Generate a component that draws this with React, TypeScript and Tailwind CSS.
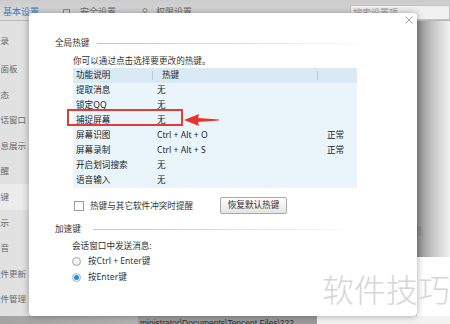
const sideItems = ['登录', '主面板', '状态', '会话窗口', '信息展示', '提醒', '热键', '显示', '声音', '软件更新', '文件管理'];

const hotkeys = [
  { name: '提取消息', key: '无', state: '' },
  { name: '锁定QQ', key: '无', state: '' },
  { name: '捕捉屏幕', key: '无', state: '' },
  { name: '屏幕识图', key: 'Ctrl + Alt + O', state: '正常' },
  { name: '屏幕录制', key: 'Ctrl + Alt + S', state: '正常' },
  { name: '开启划词搜索', key: '无', state: '' },
  { name: '语音输入', key: '无', state: '' },
];

function SectionTitle({ label, gap, width }: { label: string; gap: string; width: string }) {
  return (
    <div className="flex items-center h-[12px]">
      <span className="leading-[12px] text-[#333]">{label}</span>
      <span className={`${gap} ${width} h-px bg-gradient-to-r from-[#b4c7d5] via-[#d5e1ea] to-transparent`} />
    </div>
  );
}

function Radio({ checked }: { checked?: boolean }) {
  if (checked) {
    return (
      <span className="w-[9px] h-[9px] rounded-full border border-[#8db6d6] bg-white flex items-center justify-center">
        <span className="w-[5px] h-[5px] rounded-full bg-[#1c8de0]" />
      </span>
    );
  }
  return <span className="w-[9px] h-[9px] rounded-full border border-[#a3a3a3] bg-gradient-to-b from-white to-[#ececec]" />;
}

export default function App() {
  return (
    <div className="relative w-[450px] h-[324px] overflow-hidden bg-white font-['Noto_Sans','Noto_Sans_CJK_SC',sans-serif] text-[#333]">
      {/* settings window behind the dialog */}
      <div className="flex flex-col h-full">
        <div className="h-[21px] shrink-0 flex items-start bg-gradient-to-b from-[#cbcbcb] to-[#e2e2e2] border-b border-[#b7b7b7] text-[9px]">
          <span className="ml-[3px] mt-[6px] leading-[12px] text-[#3a7fc2]">基本设置</span>
          <span className="ml-[24px] mt-[9px] w-[7px] h-[7px] border border-[#8a8a8a]" />
          <span className="ml-[10px] mt-[6px] leading-[12px] text-[#6a6a6a]">安全设置</span>
          <svg className="ml-[25px] mt-[8px]" width="8" height="8" viewBox="0 0 8 8">
            <circle cx="4" cy="2.5" r="2" fill="none" stroke="#8a8a8a" strokeWidth="1" />
            <path d="M0.5 8 C1 5.5 7 5.5 7.5 8" fill="none" stroke="#8a8a8a" strokeWidth="1" />
          </svg>
          <span className="ml-[7px] mt-[6px] leading-[12px] text-[#6a6a6a]">权限设置</span>
          <div className="ml-auto mt-[5px] w-[100px] h-[15px] border border-[#c2c2c2] bg-[#f1f1f1] pl-[2px] leading-[13px] text-[#9a9a9a]">
            搜索设置项
          </div>
        </div>

        <div className="flex flex-1 min-h-0">
          <div className="w-[29px] shrink-0 bg-[#e1e1e1] overflow-hidden pt-[7px] text-[8.5px] text-[#6b6b6b]">
            {sideItems.map((item, i) => (
              <div
                key={item}
                className={`h-[25.6px] leading-[25.6px] whitespace-nowrap ml-[-8px] ${i === 0 ? 'mb-[2.4px]' : ''} ${
                  item === '热键' ? 'bg-[#ececec]' : ''
                }`}
              >
                {item}
              </div>
            ))}
          </div>
          <div className="flex-1 bg-[#d6d6d6]" />
          <div className="w-[33px] shrink-0 flex flex-col">
            <div className="h-[236px] bg-gradient-to-r from-[#8a8a8a] via-[#c9c9c9] to-[#f1f1f1] pt-[204px]">
              <span className="block ml-[-3px] text-[8px] leading-[12px] text-[#777]">页</span>
            </div>
            <div className="flex-1 bg-white" />
          </div>
        </div>

        <div className="h-[8px] shrink-0 flex overflow-hidden">
          <div className="w-[138px] bg-gradient-to-r from-[#a3a3a3] to-[#b2b2b2]" />
          <div className="w-[179px] bg-[#9b9b9b] pl-[2px] pt-[1px] font-['Liberation_Sans',sans-serif] text-[8.5px] leading-[12px] text-[#2a2a2a] whitespace-nowrap">
            ministrator\Documents\Tencent Files\222
          </div>
          <div className="flex-1 bg-[#f2f2f2]" />
        </div>
      </div>

      {/* hotkey dialog */}
      <div className="absolute left-[29px] top-[13px] w-[388px] h-[303px] rounded-[4px] bg-white shadow-[0_0_7px_rgba(0,0,0,0.35)] pt-[24px] pl-[26px] text-[8.6px]">
        <svg className="absolute right-[4px] top-[3px]" width="8" height="8" viewBox="0 0 8 8">
          <path d="M0.5 0.5 L7.5 7.5 M7.5 0.5 L0.5 7.5" stroke="#a2a2a2" strokeWidth="1" />
        </svg>

        <SectionTitle label="全局热键" gap="ml-[8px]" width="w-[280px]" />
        <div className="ml-[18px] mt-[6px] leading-[12px] text-[#333]">你可以通过点击选择要更改的热键。</div>

        <div className="ml-[18px] mt-[1px] w-[284px] bg-[#eaf5fb] text-[#222]">
          <div className="grid grid-cols-[79px_165px_1fr] h-[15px] bg-[#d9eaf5]">
            <div className="pl-[3px] leading-[15px]">功能说明</div>
            <div className="flex items-center">
              <span className="w-px h-[9px] bg-[#b8cad8]" />
              <span className="ml-[9px] leading-[15px]">热键</span>
            </div>
            <div className="flex items-center">
              <span className="w-px h-[9px] bg-[#b8cad8]" />
            </div>
          </div>
          {hotkeys.map((row) => (
            <div key={row.name} className="grid grid-cols-[79px_165px_1fr] h-[15px] leading-[15px]">
              <div className="pl-[3px] whitespace-nowrap">{row.name}</div>
              <div className="pl-[5px] whitespace-nowrap">{row.key}</div>
              <div className="pl-[10px]">{row.state}</div>
            </div>
          ))}
        </div>

        <div className="mt-[9px] ml-[19px] flex items-center h-[17px]">
          <span className="w-[10px] h-[10px] border border-[#9c9c9c] bg-white" />
          <span className="ml-[6px] w-[130px] leading-[12px] text-[#333]">热键与其它软件冲突时提醒</span>
          <button
            type="button"
            className="w-[67px] h-[17px] border border-[#a8a8a8] rounded-[2px] bg-gradient-to-b from-[#fdfdfd] to-[#e4e4e4] text-[#333] leading-[15px]"
          >
            恢复默认热键
          </button>
        </div>

        <div className="mt-[9px]">
          <SectionTitle label="加速键" gap="ml-[12px]" width="w-[272px]" />
        </div>
        <div className="ml-[17px] mt-[5px] leading-[12px]">会话窗口中发送消息:</div>
        <div className="ml-[17px] mt-[3px] flex items-center h-[12px]">
          <Radio />
          <span className="ml-[7px] leading-[12px]">按Ctrl + Enter键</span>
        </div>
        <div className="ml-[17px] mt-[4px] flex items-center h-[12px]">
          <Radio checked />
          <span className="ml-[7px] leading-[12px]">按Enter键</span>
        </div>
      </div>

      {/* red annotation over the table */}
      <div className="absolute left-[67px] top-[109px] w-[116px] h-[17px] border-2 border-[#e33b35]" />
      <svg className="absolute left-[183px] top-[113px]" width="36" height="14" viewBox="0 0 36 14">
        <path d="M1 7 L16 1 L15 5 L36 6.4 L36 7.6 L15 9 L16 13 Z" fill="#e8322c" />
      </svg>

      {/* watermark */}
      <div className="absolute left-[322px] top-[270px] font-['Noto_Sans_CJK_SC',sans-serif] font-light text-[32px] leading-[36px] text-[#d6d6d6] whitespace-nowrap">
        软件技巧
      </div>
    </div>
  );
}
